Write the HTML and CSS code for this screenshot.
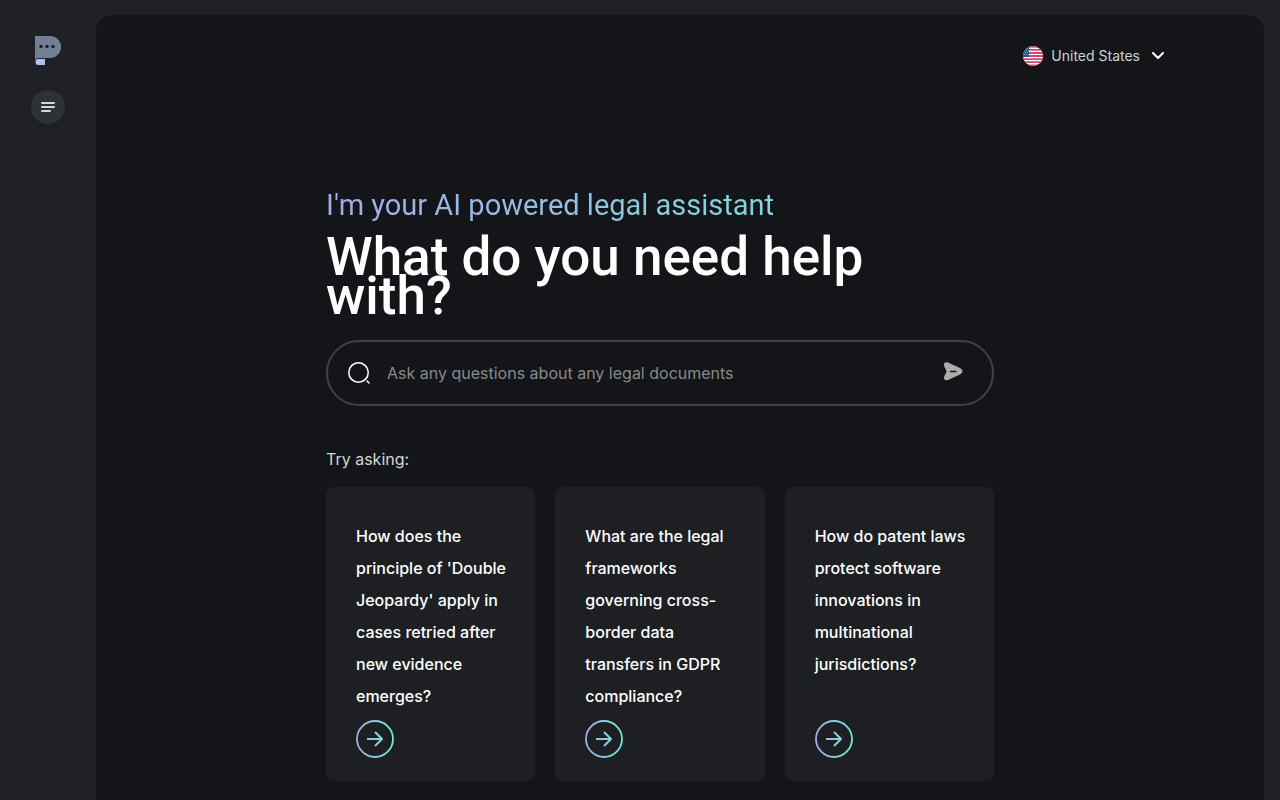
FILE: index.html
```html
<!DOCTYPE html>
<html lang="en">
<head>
<meta charset="utf-8">
<meta name="viewport" content="width=device-width, initial-scale=1">
<title>Legal assistant</title>
<link rel="stylesheet" href="styles.css">
</head>
<body>
<svg class="defs" width="0" height="0" aria-hidden="true">
  <defs>
    <linearGradient id="accent" gradientUnits="userSpaceOnUse" x1="0" y1="0" x2="38" y2="0">
      <stop offset="0" stop-color="#a5a9ea"/>
      <stop offset="1" stop-color="#6ceed0"/>
    </linearGradient>
    <symbol id="go" viewBox="0 0 38 38">
      <circle cx="19" cy="19" r="18" fill="none" stroke="url(#accent)" stroke-width="1.800"/>
      <path d="M11 19H26M19 12L26 19L19 26" fill="none" stroke="url(#accent)" stroke-width="2" stroke-linejoin="round"/>
    </symbol>
  </defs>
</svg>
<div class="app">
  <aside class="sidebar">
    <a class="logo" href="#" aria-label="Home">
      <svg width="26" height="30" viewBox="0 0 26 30">
        <path d="M0 0H15A11 11 0 0 1 15 22H4Q0 22 0 25Z" fill="#737f93"/>
        <path d="M3 23H10V29H4A3 3 0 0 1 3 23Z" fill="#adc5eb"/>
        <g fill="#202127"><circle cx="6" cy="10.500" r="1.700"/><circle cx="12" cy="10.500" r="1.700"/><circle cx="18" cy="10.500" r="1.700"/></g>
      </svg>
    </a>
    <button class="menu" type="button" aria-label="Open menu">
      <svg width="14" height="10" viewBox="0 0 14 10" stroke="#d4d7d6" stroke-width="2" stroke-linecap="round"><path d="M1 1H13M1 5H13M1 9H9"/></svg>
    </button>
  </aside>
  <main class="panel">
    <header class="topbar">
      <button class="country" type="button">
        <svg width="20" height="20" viewBox="0 0 20 20">
          <clipPath id="round"><circle cx="10" cy="10" r="10"/></clipPath>
          <g clip-path="url(#round)">
            <path fill="#fff" d="M0 0H20V20H0Z"/>
            <path stroke="#d0496a" stroke-width="1.800" d="M0 .8H20M0 3.900H20M0 7H20M0 10H20M0 13.100H20M0 16.200H20M0 19.300H20"/>
            <path fill="#27568f" d="M0 0H6V11H0Z"/>
            <path stroke="#7d97bb" stroke-width="1" stroke-dasharray="1 1" d="M0 2.500H6M1 4.500H6M0 6.500H6M1 8.500H6"/>
          </g>
        </svg>
        <span>United States</span>
        <svg class="chevron" width="14" height="8" viewBox="0 0 14 8" fill="none" stroke="#fff" stroke-width="2" stroke-linecap="round" stroke-linejoin="round"><path d="M2 1L7 6L12 1"/></svg>
      </button>
    </header>
    <div class="content">
      <p class="intro">I'm your AI powered legal assistant</p>
      <h1 class="title">What do you need help with?</h1>
      <form class="search">
        <svg width="24" height="24" viewBox="0 0 24 24" fill="none" stroke="#fff" stroke-width="1.500" stroke-linecap="round"><circle cx="11.500" cy="11.500" r="9.750"/><path d="M20 20L22 22"/></svg>
        <input class="field" type="text" aria-label="Question" placeholder="Ask any questions about any legal documents">
        <button class="send" type="submit" aria-label="Send">
          <svg width="19" height="19" viewBox="0 0 19 19"><path fill="#acacac" d="M0 3C0 0 2 0 4 .5L16 6Q21 9 16 12.500L4 18C1 19 0 17.500 0 16Q0 14 2 11Q3 9.500 2 8Q0 5 0 3Z"/><path d="M6.500 9.500H12" stroke="#141519" stroke-width="1.500" stroke-linecap="round"/></svg>
        </button>
      </form>
      <h2 class="label">Try asking:</h2>
      <div class="cards">
        <article class="card"><p>How does the principle of 'Double Jeopardy' apply in cases retried after new evidence emerges?</p><button type="button" class="go" aria-label="Ask about Double Jeopardy"><svg width="38" height="38"><use href="#go"/></svg></button></article>
        <article class="card"><p>What are the legal frameworks governing cross-border data transfers in GDPR compliance?</p><button type="button" class="go" aria-label="Ask about GDPR compliance"><svg width="38" height="38"><use href="#go"/></svg></button></article>
        <article class="card"><p>How do patent laws protect software innovations in multinational jurisdictions?</p><button type="button" class="go" aria-label="Ask about patent laws"><svg width="38" height="38"><use href="#go"/></svg></button></article>
      </div>
    </div>
  </main>
</div>
</body>
</html>
```

FILE: styles.css
```css
* { box-sizing: border-box; }
body { margin: 0; background: #202127; color: #fff; font-family: Inter, "Liberation Sans", sans-serif; }
h1, h2, p { margin: 0; }
button { padding: 0; border: 0; background: none; color: inherit; font: inherit; cursor: pointer; }
svg { display: block; flex: none; }
.defs { position: absolute; }
.app { display: flex; height: 100vh; overflow: hidden; }
.sidebar { flex: 0 0 96px; display: flex; flex-direction: column; align-items: center; gap: 24px; padding-top: 36px; }
.logo { display: block; }
.menu { width: 34px; height: 34px; border-radius: 50%; display: grid; place-items: center; background: #2e3138; box-shadow: 0 2px 6px rgba(0, 0, 0, .06); }
.panel { flex: 1; min-width: 0; margin: 15px 16px 0 0; padding-right: 40px; background: #141519; border-radius: 16px 16px 0 0; overflow: hidden; }
.topbar { display: flex; justify-content: flex-end; padding: 31px 59px 0 0; }
.country { display: flex; align-items: center; gap: 8px; color: #cfd0d2; font-size: 14px; line-height: 20px; }
.chevron { margin-left: 3px; }
.content { max-width: 668px; margin: 120px auto 0; }
.intro { width: fit-content; font-family: Roboto, sans-serif; font-size: 29px; line-height: 38px; background: linear-gradient(90deg, #a5a9ea, #84d6da); background-clip: text; -webkit-background-clip: text; color: transparent; }
.title { margin-top: 14px; font-family: Roboto, sans-serif; font-size: 53px; font-weight: 500; line-height: 39px; }
.search { display: flex; align-items: center; height: 66px; margin-top: 24px; padding: 0 29px 0 19px; border: 2px solid #404145; border-radius: 33px; }
.field { flex: 1; min-width: 0; margin-left: 16px; padding: 0; border: 0; outline: 0; background: none; color: #fff; font: 400 16px/24px Inter, "Liberation Sans", sans-serif; }
.field::placeholder { color: #88898d; opacity: 1; }
.send { padding-bottom: 4px; }
.label { margin-top: 41px; font-size: 16px; font-weight: 400; line-height: 24px; color: #d4d5d7; }
.cards { display: grid; grid-template-columns: repeat(3, 1fr); gap: 20px; margin-top: 16px; }
.card { display: flex; flex-direction: column; padding: 33px 24px 23px 30px; border-radius: 8px; background: #1e1f23; }
.card p { margin-bottom: 8px; font-size: 16px; font-weight: 500; line-height: 32px; }
.go { align-self: flex-start; margin-top: auto; }
```
